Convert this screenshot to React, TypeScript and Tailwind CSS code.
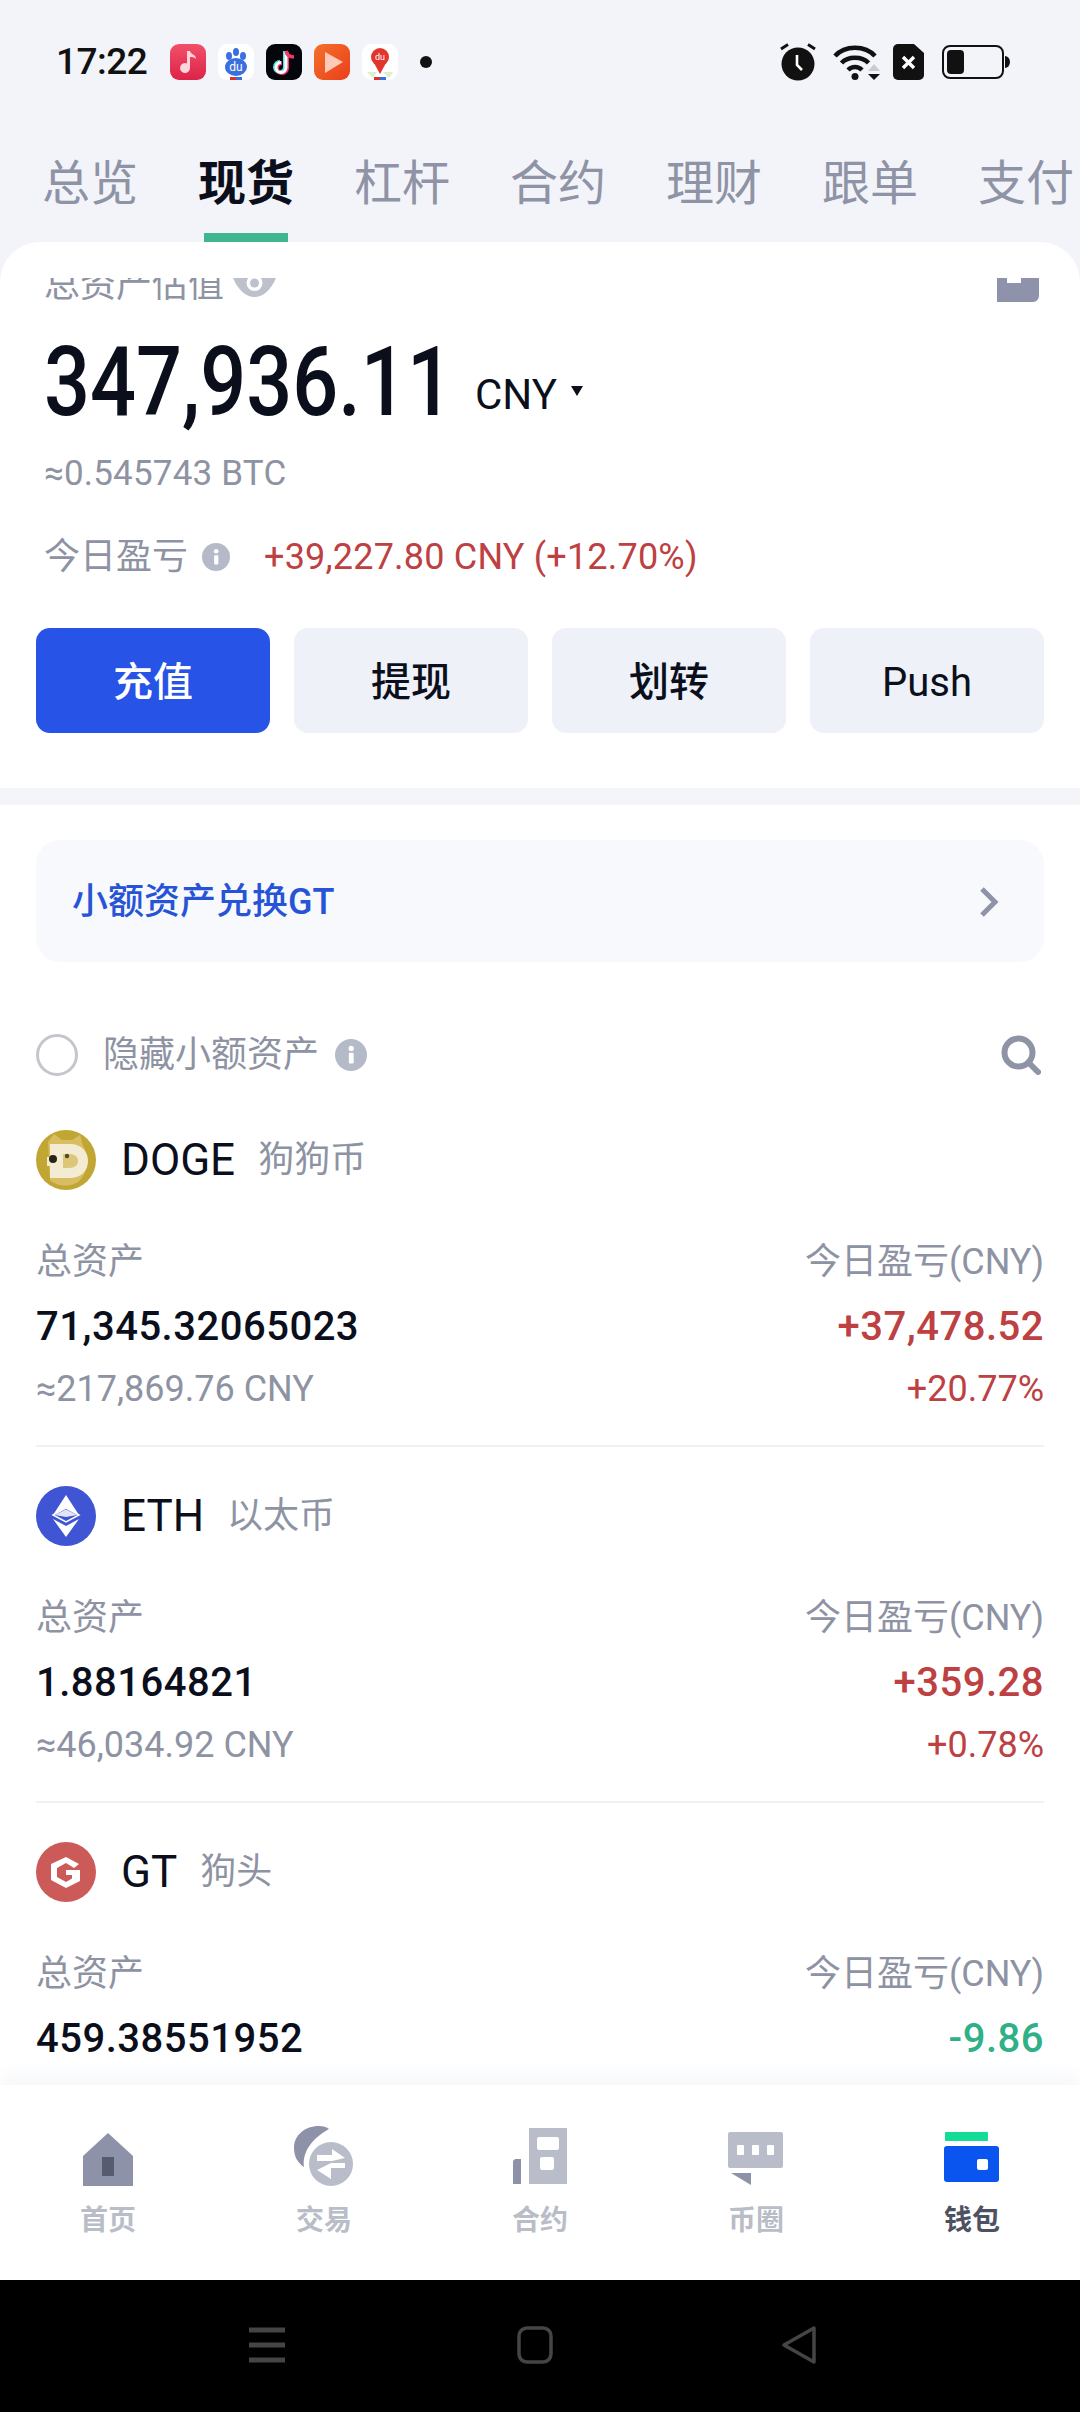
import { ReactNode } from 'react'

const FONT = "font-['Roboto','Noto_Sans_CJK_SC',sans-serif]"

const TABS = ['总览', '现货', '杠杆', '合约', '理财', '跟单', '支付']

interface Asset {
  symbol: string
  name: string
  icon: ReactNode
  amount: string
  cny?: string
  pnl: string
  pct?: string
  up: boolean
}

function InfoDot({ size = 30 }: { size?: number }) {
  return (
    <svg width={size} height={size} viewBox="0 0 30 30" className="shrink-0">
      <circle cx="15" cy="15" r="15" fill="#b4bac8" />
      <rect x="13" y="13" width="4.5" height="10" rx="1" fill="#fff" />
      <circle cx="15.2" cy="8.8" r="2.5" fill="#fff" />
    </svg>
  )
}

function DogeIcon() {
  return (
    <svg width="60" height="60" viewBox="0 0 60 60">
      <circle cx="30" cy="30" r="30" fill="#c2a633" />
      <path d="M12 12 L18 4 L26 10 H36 L44 5 L47 16 C54 26 52 44 42 52 C32 58 20 56 14 50Z" fill="#d9bd62" />
      <path d="M14 14 H34 C46 14 52 22 52 31 C52 41 45 48 34 48 H14 V36 H11 V27 H14Z" fill="#f3ecd2" />
      <path d="M27 24 H33 C39 24 42 27 42 31 C42 35 39 38 33 38 H27Z" fill="#dcc67a" />
      <circle cx="17" cy="29" r="4" fill="#2b2414" />
      <circle cx="31" cy="26" r="2.2" fill="#5a4a20" />
    </svg>
  )
}

function EthIcon() {
  return (
    <svg width="60" height="60" viewBox="0 0 60 60">
      <circle cx="30" cy="30" r="30" fill="#3f55d3" />
      <path d="M30 9 L43 29 L30 22 L17 29Z" fill="#fff" />
      <path d="M17 29 L30 22 L43 29 L30 36Z" fill="#3f55d3" stroke="#fff" strokeWidth="1.5" />
      <path d="M19 29 L30 23.5 L41 29 L30 31Z" fill="#fff" opacity="0.85" />
      <path d="M17 33 L30 40 L43 33 L30 51Z" fill="#fff" />
    </svg>
  )
}

function GtIcon() {
  return (
    <svg width="60" height="60" viewBox="0 0 60 60">
      <circle cx="30" cy="30" r="30" fill="#cc5a58" />
      <path
        d="M30 15 L43 22 L38 26 L30 21 L21 26 V35 L30 40 L36 36.5 V33 H30 V28 H44 V39 L30 46 L15 38 V22Z"
        fill="#fff"
      />
    </svg>
  )
}

const ASSETS: Asset[] = [
  {
    symbol: 'DOGE',
    name: '狗狗币',
    icon: <DogeIcon />,
    amount: '71,345.32065023',
    cny: '≈217,869.76 CNY',
    pnl: '+37,478.52',
    pct: '+20.77%',
    up: true,
  },
  {
    symbol: 'ETH',
    name: '以太币',
    icon: <EthIcon />,
    amount: '1.88164821',
    cny: '≈46,034.92 CNY',
    pnl: '+359.28',
    pct: '+0.78%',
    up: true,
  },
  {
    symbol: 'GT',
    name: '狗头',
    icon: <GtIcon />,
    amount: '459.38551952',
    pnl: '-9.86',
    up: false,
  },
]

function AppBadges() {
  return (
    <div className="flex items-center gap-[12px]">
      <svg width="36" height="36" viewBox="0 0 36 36">
        <defs>
          <linearGradient id="music" x1="0" y1="0" x2="0" y2="1">
            <stop offset="0" stopColor="#f2506a" />
            <stop offset="1" stopColor="#dc2348" />
          </linearGradient>
        </defs>
        <rect width="36" height="36" rx="9" fill="url(#music)" />
        <path d="M20 7 v17 a5 5 0 1 1 -3 -4.5 V7z M20 7 c1 4 6 3 6 8 c-2 -2 -4 -2 -6 -2z" fill="#ffd4da" />
      </svg>
      <svg width="36" height="36" viewBox="0 0 36 36">
        <rect width="36" height="36" rx="9" fill="#fff" />
        <ellipse cx="11" cy="12" rx="3" ry="4" fill="#3a6fe0" />
        <ellipse cx="18" cy="8" rx="3" ry="4" fill="#3a6fe0" />
        <ellipse cx="25" cy="12" rx="3" ry="4" fill="#3a6fe0" />
        <ellipse cx="18" cy="23" rx="11" ry="9" fill="#3a6fe0" />
        <text x="18" y="27" textAnchor="middle" fontSize="12" fill="#fff" fontFamily="Roboto, sans-serif">
          du
        </text>
        <rect x="12" y="33" width="6" height="3" fill="#d8332f" />
        <rect x="18" y="33" width="6" height="3" fill="#3a6fe0" />
      </svg>
      <svg width="36" height="36" viewBox="0 0 36 36">
        <rect width="36" height="36" rx="9" fill="#05060c" />
        <path d="M19 7 v16 a5 5 0 1 1 -5 -5" fill="none" stroke="#4de8e8" strokeWidth="4" />
        <path d="M21 8 v16 a5 5 0 1 1 -5 -5" fill="none" stroke="#f0386a" strokeWidth="4" />
        <path d="M20 7.5 v16 a5 5 0 1 1 -5 -5" fill="none" stroke="#fff" strokeWidth="3" />
        <path d="M20 7 c1 4 4 6 8 6" fill="none" stroke="#f0386a" strokeWidth="3.5" />
      </svg>
      <svg width="36" height="36" viewBox="0 0 36 36">
        <defs>
          <linearGradient id="play" x1="0" y1="0" x2="1" y2="1">
            <stop offset="0" stopColor="#f5702a" />
            <stop offset="1" stopColor="#ea3f1c" />
          </linearGradient>
        </defs>
        <rect width="36" height="36" rx="9" fill="url(#play)" />
        <path d="M11 8 L29 18 L11 29Z" fill="#ffc9b8" strokeLinejoin="round" />
      </svg>
      <svg width="36" height="36" viewBox="0 0 36 36">
        <rect width="36" height="36" rx="9" fill="#fff" />
        <path d="M5 28 h10 l-4 6z M21 28 h10 l-4 6z" fill="#dbeed0" />
        <circle cx="18" cy="13" r="9" fill="#e2352e" />
        <path d="M12 19 L18 30 L24 19Z" fill="#e2352e" />
        <text x="18" y="16" textAnchor="middle" fontSize="9" fill="#fff" fontFamily="Roboto, sans-serif">
          du
        </text>
        <rect x="12" y="33" width="6" height="3" fill="#d8332f" />
        <rect x="18" y="33" width="6" height="3" fill="#3a6fe0" />
      </svg>
    </div>
  )
}

function SystemIcons() {
  return (
    <div className="flex items-center">
      <svg width="36" height="38" viewBox="0 0 36 38" className="mr-[17px]">
        <circle cx="18" cy="21" r="16.5" fill="#111" />
        <path d="M1 6 L8 1.5 M35 6 L28 1.5" stroke="#111" strokeWidth="3" />
        <path d="M17 12 V22 L22 27" stroke="#fff" strokeWidth="2.6" fill="none" />
      </svg>
      <svg width="48" height="38" viewBox="0 0 48 38" className="mr-[12px]">
        <path d="M2 13 C12 2 32 2 42 13" fill="none" stroke="#111" strokeWidth="4.5" />
        <path d="M8.5 20 C15 13 29 13 35.5 20" fill="none" stroke="#111" strokeWidth="4.5" />
        <path d="M15 27 C19 23 25 23 29 27" fill="none" stroke="#111" strokeWidth="4.5" />
        <circle cx="22" cy="33.5" r="3.5" fill="#111" />
        <path d="M35 28 L41 21 L47 28Z" fill="#c9cbd0" />
        <path d="M35 31 L47 31 L41 37Z" fill="#111" />
      </svg>
      <svg width="31" height="36" viewBox="0 0 31 36" className="mr-[18px]">
        <path d="M5 0 H21 L31 9 V31 a5 5 0 0 1 -5 5 H5 a5 5 0 0 1 -5 -5 V5 a5 5 0 0 1 5 -5Z" fill="#111" />
        <path d="M10 13 L21 24 M21 13 L10 24" stroke="#fff" strokeWidth="3.4" />
      </svg>
      <svg width="68" height="34" viewBox="0 0 68 34">
        <rect x="1" y="1" width="60" height="32" rx="7" fill="none" stroke="#111" strokeWidth="2" />
        <rect x="5" y="5" width="17" height="24" rx="4" fill="#111" />
        <path d="M63 11 a5 6 0 0 1 0 12Z" fill="#111" />
      </svg>
    </div>
  )
}

function StatusBar() {
  return (
    <div className="h-[124px] shrink-0 flex items-center pl-[56px] pr-[70px]">
      <span className="text-[37px] font-medium text-[#111] tracking-[-0.5px] w-[114px]">17:22</span>
      <AppBadges />
      <span className="ml-[22px] w-[12px] h-[12px] rounded-full bg-[#111]" />
      <div className="flex-1" />
      <SystemIcons />
    </div>
  )
}

function TabStrip() {
  return (
    <div className="h-[118px] shrink-0 flex pl-[42px] gap-[60px] overflow-hidden">
      {TABS.map((tab, i) => (
        <div key={tab} className="relative shrink-0 h-full flex items-center justify-center pt-[2px]">
          <span
            className={
              i === 1
                ? 'text-[48px] font-bold text-[#0b0f1c] leading-none'
                : 'text-[48px] text-[#8e93a6] leading-none'
            }
          >
            {tab}
          </span>
          {i === 1 && <div className="absolute bottom-0 left-[6px] right-[6px] h-[9px] bg-[#41b58d]" />}
        </div>
      ))}
    </div>
  )
}

function Summary() {
  return (
    <div className="shrink-0">
      <div className="mt-[36px] h-[26px] overflow-hidden flex justify-between items-start pl-[44px] pr-[41px]">
        <div className="flex items-start gap-[9px]">
          <span className="text-[36px] text-[#8e93a3] leading-[36px] mt-[-11px]">总资产估值</span>
          <svg width="43" height="20" viewBox="0 0 43 20">
            <path d="M0 0 H43 C38 12 30 19 21.5 19 C13 19 5 12 0 0Z" fill="#bdc1cc" />
            <circle cx="21.5" cy="5" r="8" fill="#fff" />
            <circle cx="21.5" cy="5" r="4.5" fill="#bdc1cc" />
          </svg>
        </div>
        <svg width="42" height="24" viewBox="0 0 42 24">
          <path d="M0 0 H10 V5 H24 V0 H42 V18 a6 6 0 0 1 -6 6 H0Z" fill="#8e93ab" />
        </svg>
      </div>
      <div className="mt-[38px] pl-[44px] h-[80px] flex items-center">
        <span className="text-[81px] font-medium text-[#0b0f1c] leading-none scale-y-[1.18]">347,936.11</span>
        <span className="ml-[22px] mt-[26px] text-[42px] text-[#0b0f1c] leading-none">CNY</span>
        <span className="ml-[14px] mt-[18px] border-x-[6px] border-t-[10px] border-x-transparent border-t-[#0b0f1c]" />
      </div>
      <div className="mt-[32px] pl-[44px] h-[40px] flex items-center text-[35px] tracking-[0.2px] text-[#8e93a3]">
        ≈0.545743 BTC
      </div>
      <div className="mt-[43px] pl-[44px] h-[40px] flex items-center">
        <span className="text-[36px] text-[#8e93a3]">今日盈亏</span>
        <span className="ml-[14px]">
          <InfoDot size={28} />
        </span>
        <span className="ml-[34px] text-[36px] tracking-[0.2px] text-[#bd4042]">+39,227.80 CNY (+12.70%)</span>
      </div>
      <div className="mt-[51px] px-[36px] grid grid-cols-4 gap-[24px]">
        <button className="h-[105px] pt-[4px] rounded-[14px] bg-[#2754e6] text-white text-[40px] font-medium">充值</button>
        <button className="h-[105px] pt-[4px] rounded-[14px] bg-[#eef1f8] text-[#0b0f1c] text-[40px] font-medium">提现</button>
        <button className="h-[105px] pt-[4px] rounded-[14px] bg-[#eef1f8] text-[#0b0f1c] text-[40px] font-medium">划转</button>
        <button className="h-[105px] pt-[4px] rounded-[14px] bg-[#eef1f8] text-[#0b0f1c] text-[40px]">Push</button>
      </div>
      <div className="mt-[55px] h-[17px] bg-[#f4f5f8]" />
    </div>
  )
}

function AssetRow({ asset, last }: { asset: Asset; last: boolean }) {
  const color = asset.up ? 'text-[#bd4042]' : 'text-[#2fb086]'
  return (
    <div className="shrink-0 mx-[36px]">
      <div className="h-[66px] mt-[36px] flex items-center">
        {asset.icon}
        <span className="ml-[25px] text-[44px] text-[#0b0f1c] leading-none">{asset.symbol}</span>
        <span className="ml-[23px] text-[36px] text-[#8e93a3] leading-none">{asset.name}</span>
      </div>
      <div className="mt-[47px] h-[44px] flex justify-between items-center text-[36px] text-[#8e93a3]">
        <span>总资产</span>
        <span>今日盈亏(CNY)</span>
      </div>
      <div className="mt-[21px] h-[44px] flex justify-between items-center text-[40px] tracking-[0.5px]">
        <span className="text-[#0b0f1c] font-medium">{asset.amount}</span>
        <span className={`${color} font-medium`}>{asset.pnl}</span>
      </div>
      {!last && (
        <div className="mt-[18px] pb-[34px] h-[80px] flex justify-between items-center text-[36px] border-b-2 border-[#f0f1f4]">
          <span className="text-[#8e93a3]">{asset.cny}</span>
          <span className={color}>{asset.pct}</span>
        </div>
      )}
    </div>
  )
}

function AssetList() {
  return (
    <div>
      <div className="mt-[35px] mx-[36px] h-[122px] pt-[2px] rounded-[24px] bg-[#f7f9fd] flex items-center justify-between pl-[36px] pr-[44px]">
        <span className="text-[36px] font-medium text-[#2754d6]">小额资产兑换GT</span>
        <svg width="22" height="32" viewBox="0 0 22 32">
          <path d="M4 3 L17 16 L4 29" fill="none" stroke="#8e93a6" strokeWidth="5" />
        </svg>
      </div>
      <div className="mt-[71px] h-[44px] px-[36px] flex items-center">
        <span className="w-[42px] h-[42px] rounded-full border-[3px] border-[#c4c6cc]" />
        <span className="ml-[25px] text-[36px] text-[#8e93a3]">隐藏小额资产</span>
        <span className="ml-[16px]">
          <InfoDot size={32} />
        </span>
        <div className="flex-1" />
        <svg width="40" height="40" viewBox="0 0 40 40" className="mr-[3px]">
          <circle cx="17.5" cy="17.5" r="14" fill="none" stroke="#8e93a6" strokeWidth="6" />
          <path d="M28 28 L37 37" stroke="#8e93a6" strokeWidth="6" strokeLinecap="round" />
        </svg>
      </div>
      <div className="mt-[50px]">
        {ASSETS.map((a, i) => (
          <AssetRow key={a.symbol} asset={a} last={i === ASSETS.length - 1} />
        ))}
      </div>
    </div>
  )
}

function BottomTabs() {
  return (
    <div className="h-[195px] shrink-0 bg-white grid grid-cols-5 relative shadow-[0_-12px_16px_rgba(240,243,248,0.55)]">
      <div className="flex flex-col items-center pt-[41px]">
        <svg width="50" height="60" viewBox="0 0 50 60" className="h-[60px]">
          <path d="M25 7 L50 30 V60 H0 V30Z" fill="#8e92a8" />
          <rect x="19" y="31" width="12" height="19" fill="#565b70" />
        </svg>
        <span className="mt-[17px] text-[28px] font-bold text-[#b9bdc8] leading-[36px]">首页</span>
      </div>
      <div className="flex flex-col items-center pt-[41px]">
        <svg width="62" height="60" viewBox="0 0 62 60" className="h-[60px]">
          <path d="M36 3 C34 1 30 0 26 0 C12 0 1 9 1 22 C1 31 5 37 11 41 C9 25 20 12 36 3Z" fill="#8e92a8" />
          <circle cx="38" cy="38" r="22" fill="#b9bdc9" />
          <path d="M24 29 H39 V23 L52 32 L39 35 H24Z M52 42 H38 V53 L24 44 L38 37 H52Z" fill="#fff" />
        </svg>
        <span className="mt-[17px] text-[28px] font-bold text-[#b9bdc8] leading-[36px]">交易</span>
      </div>
      <div className="flex flex-col items-center pt-[41px]">
        <svg width="54" height="60" viewBox="0 0 54 60" className="h-[60px]">
          <path d="M2 33 H8 V58 H0 V35Z" fill="#8e92a8" />
          <rect x="16" y="2" width="38" height="56" fill="#b9bdc9" />
          <rect x="24" y="11" width="22" height="13" rx="2" fill="#fff" />
          <rect x="27" y="31" width="14" height="13" rx="2" fill="#fff" />
        </svg>
        <span className="mt-[17px] text-[28px] font-bold text-[#b9bdc8] leading-[36px]">合约</span>
      </div>
      <div className="flex flex-col items-center pt-[41px]">
        <svg width="56" height="60" viewBox="0 0 56 60" className="h-[60px]">
          <rect x="0" y="6" width="55" height="36" rx="2" fill="#b9bdc9" />
          <rect x="9" y="19" width="7" height="10" rx="1" fill="#fff" />
          <rect x="24" y="19" width="7" height="10" rx="1" fill="#fff" />
          <rect x="39" y="19" width="7" height="10" rx="1" fill="#fff" />
          <path d="M3 47 H23 V59Z" fill="#8e92a8" />
        </svg>
        <span className="mt-[17px] text-[28px] font-bold text-[#b9bdc8] leading-[36px]">币圈</span>
      </div>
      <div className="flex flex-col items-center pt-[41px]">
        <svg width="56" height="60" viewBox="0 0 56 60" className="h-[60px]">
          <rect x="1" y="6" width="43" height="9" rx="1" fill="#12dc96" />
          <rect x="0" y="20" width="55" height="36" rx="3" fill="#0a55f0" />
          <rect x="33" y="33" width="11" height="11" rx="2" fill="#fff" />
        </svg>
        <span className="mt-[17px] text-[28px] font-bold text-[#4d5162] leading-[36px]">钱包</span>
      </div>
    </div>
  )
}

function NavBar() {
  return (
    <div className="h-[132px] shrink-0 bg-black relative flex items-center pl-[249px] pb-[2px]">
      <svg width="36" height="36" viewBox="0 0 36 36">
        <path d="M0 3 H36 M0 18 H36 M0 33 H36" stroke="#454545" strokeWidth="5" />
      </svg>
      <svg width="36" height="38" viewBox="0 0 36 38" className="ml-[232px]">
        <rect x="2" y="2" width="32" height="34" rx="8" fill="none" stroke="#454545" strokeWidth="3.5" />
      </svg>
      <svg width="38" height="40" viewBox="0 0 38 40" className="ml-[227px]">
        <path d="M34 3 V37 L4 20Z" fill="none" stroke="#454545" strokeWidth="3.5" strokeLinejoin="round" />
      </svg>
    </div>
  )
}

export default function App() {
  return (
    <div className={`${FONT} w-[1080px] h-[2412px] flex flex-col overflow-hidden bg-[#f3f4f9]`}>
      <StatusBar />
      <TabStrip />
      <div className="flex-1 min-h-0 overflow-hidden bg-white rounded-t-[40px]">
        <Summary />
        <AssetList />
      </div>
      <BottomTabs />
      <NavBar />
    </div>
  )
}
